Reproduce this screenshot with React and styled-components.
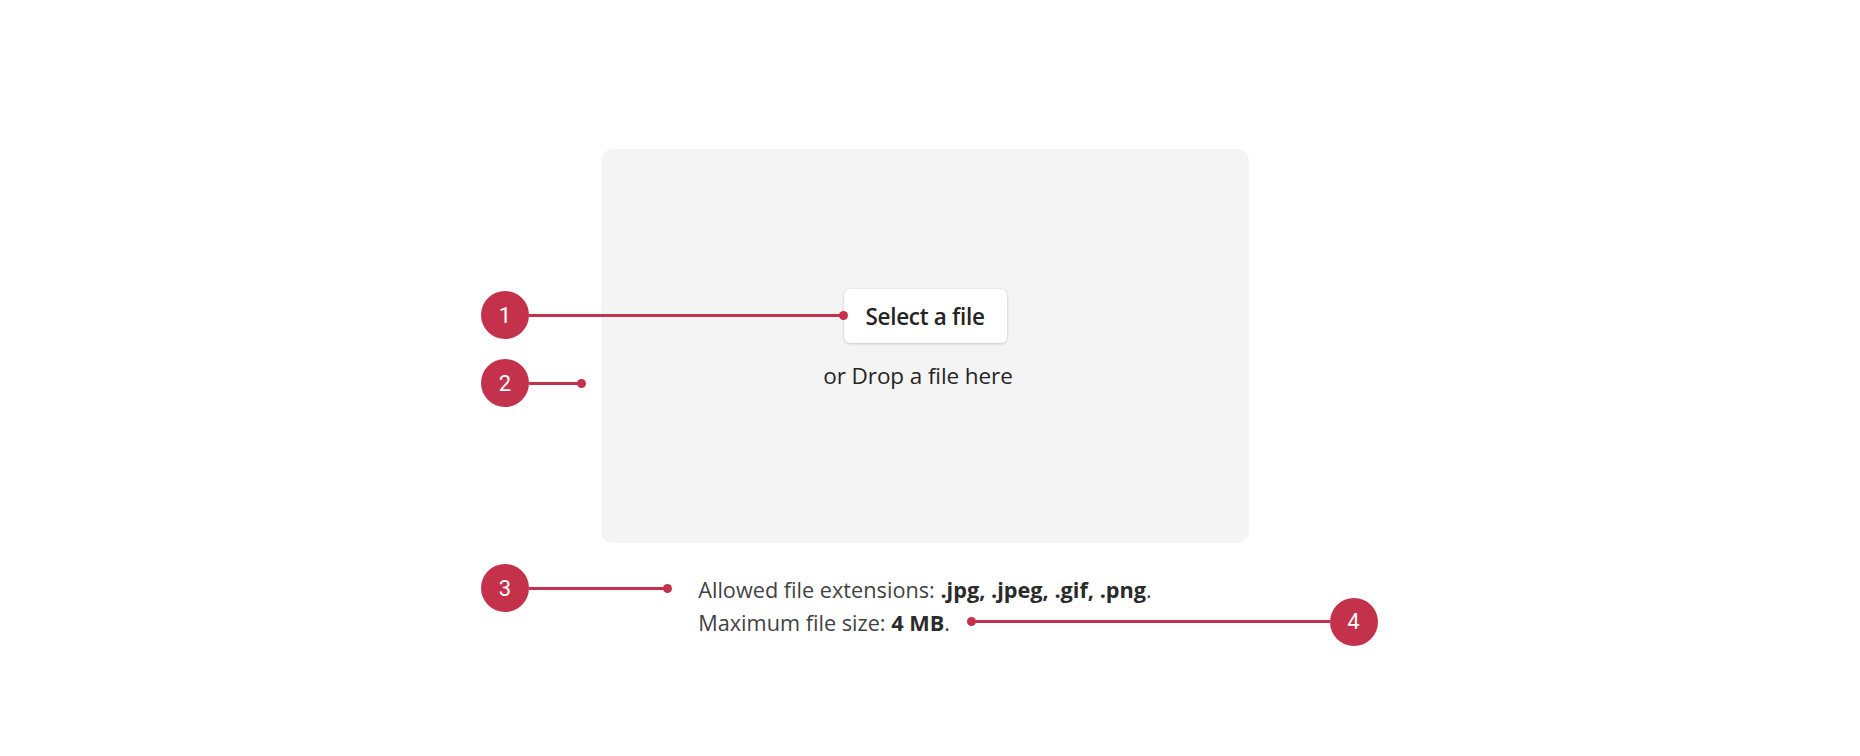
import React from 'react';
import styled, { createGlobalStyle } from 'styled-components';

const ACCENT = '#c4314b';

const GlobalStyle = createGlobalStyle`
  html, body {
    margin: 0;
    padding: 0;
    background: #ffffff;
  }
  body {
    font-family: "Open Sans", "Noto Sans", "Liberation Sans", sans-serif;
    color: #242424;
  }
`;

// callouts: circle + leader line + end dot, placed relative to the uploader column
const callouts = [
  { n: 1, left: -120, y: 166, line: 314 },
  { n: 2, left: -120, y: 234, line: 52 },
  { n: 3, left: -120, y: 439, line: 138 },
  { n: 4, left: 365.5, y: 472.5, line: 358.5, reverse: true },
];

export default function App() {
  return (
    <>
      <GlobalStyle />
      <S.Page>
        <S.Column>
          <S.DropZone>
            <S.SelectButton type="button">Select a file</S.SelectButton>
            <S.DropHint>or Drop a file here</S.DropHint>
          </S.DropZone>
          <S.Notes>
            <S.NoteLine>
              Allowed file extensions: <b>.jpg, .jpeg, .gif, .png</b>.
            </S.NoteLine>
            <S.NoteLine>
              Maximum file size: <b>4 MB</b>.
            </S.NoteLine>
          </S.Notes>

          {callouts.map(c => (
            <S.Callout key={c.n} $left={c.left} $y={c.y}>
              {c.reverse ? (
                <>
                  <S.Dot $reverse />
                  <S.Leader $width={c.line} />
                  <S.Badge>{c.n}</S.Badge>
                </>
              ) : (
                <>
                  <S.Badge>{c.n}</S.Badge>
                  <S.Leader $width={c.line} />
                  <S.Dot />
                </>
              )}
            </S.Callout>
          ))}
        </S.Column>
      </S.Page>
    </>
  );
}

const S = {
  Page: styled.div`
    display: flex;
    justify-content: center;
    padding: 149px 10px 0 0;
    min-height: 756px;
    box-sizing: border-box;
  `,
  Column: styled.div`
    position: relative;
    width: 648px;
    display: flex;
    flex-direction: column;
  `,
  DropZone: styled.div`
    height: 394px;
    box-sizing: border-box;
    background: #f4f4f4;
    border-radius: 12px;
    display: flex;
    flex-direction: column;
    align-items: center;
    padding-top: 140px;
  `,
  SelectButton: styled.button`
    height: 54px;
    width: 163px;
    padding: 0;
    border: none;
    border-radius: 6px;
    background: #ffffff;
    box-shadow: 0 1px 3px rgba(0, 0, 0, 0.16), 0 0 2px rgba(0, 0, 0, 0.1);
    font-family: "Open Sans", "Noto Sans", sans-serif;
    font-size: 22.5px;
    font-weight: 600;
    letter-spacing: -0.3px;
    color: #242424;
    cursor: pointer;
  `,
  DropHint: styled.p`
    margin: 18px 14px 0 0;
    font-size: 22.5px;
    line-height: 30px;
    letter-spacing: -0.1px;
    color: #242424;
  `,
  Notes: styled.div`
    align-self: center;
    margin-top: 30px;
    color: #424242;
    font-size: 21.7px;
    line-height: 33px;

    b {
      font-weight: 700;
      color: #2b2b2b;
    }
  `,
  NoteLine: styled.div`
    white-space: nowrap;
  `,
  Callout: styled.div`
    position: absolute;
    left: ${p => p.$left}px;
    top: ${p => p.$y - 24}px;
    height: 48px;
    display: flex;
    align-items: center;
  `,
  Badge: styled.div`
    width: 48px;
    height: 48px;
    flex: none;
    border-radius: 50%;
    background: ${ACCENT};
    color: #ffffff;
    display: flex;
    align-items: center;
    justify-content: center;
    font-family: Roboto, "Open Sans", sans-serif;
    font-size: 22px;
  `,
  Leader: styled.div`
    width: ${p => p.$width}px;
    height: 3px;
    background: ${ACCENT};
    flex: none;
  `,
  Dot: styled.div`
    width: 9px;
    height: 9px;
    flex: none;
    border-radius: 50%;
    background: ${ACCENT};
    ${p => (p.$reverse ? 'margin-right: -4.5px;' : 'margin-left: -4.5px;')}
  `,
};
